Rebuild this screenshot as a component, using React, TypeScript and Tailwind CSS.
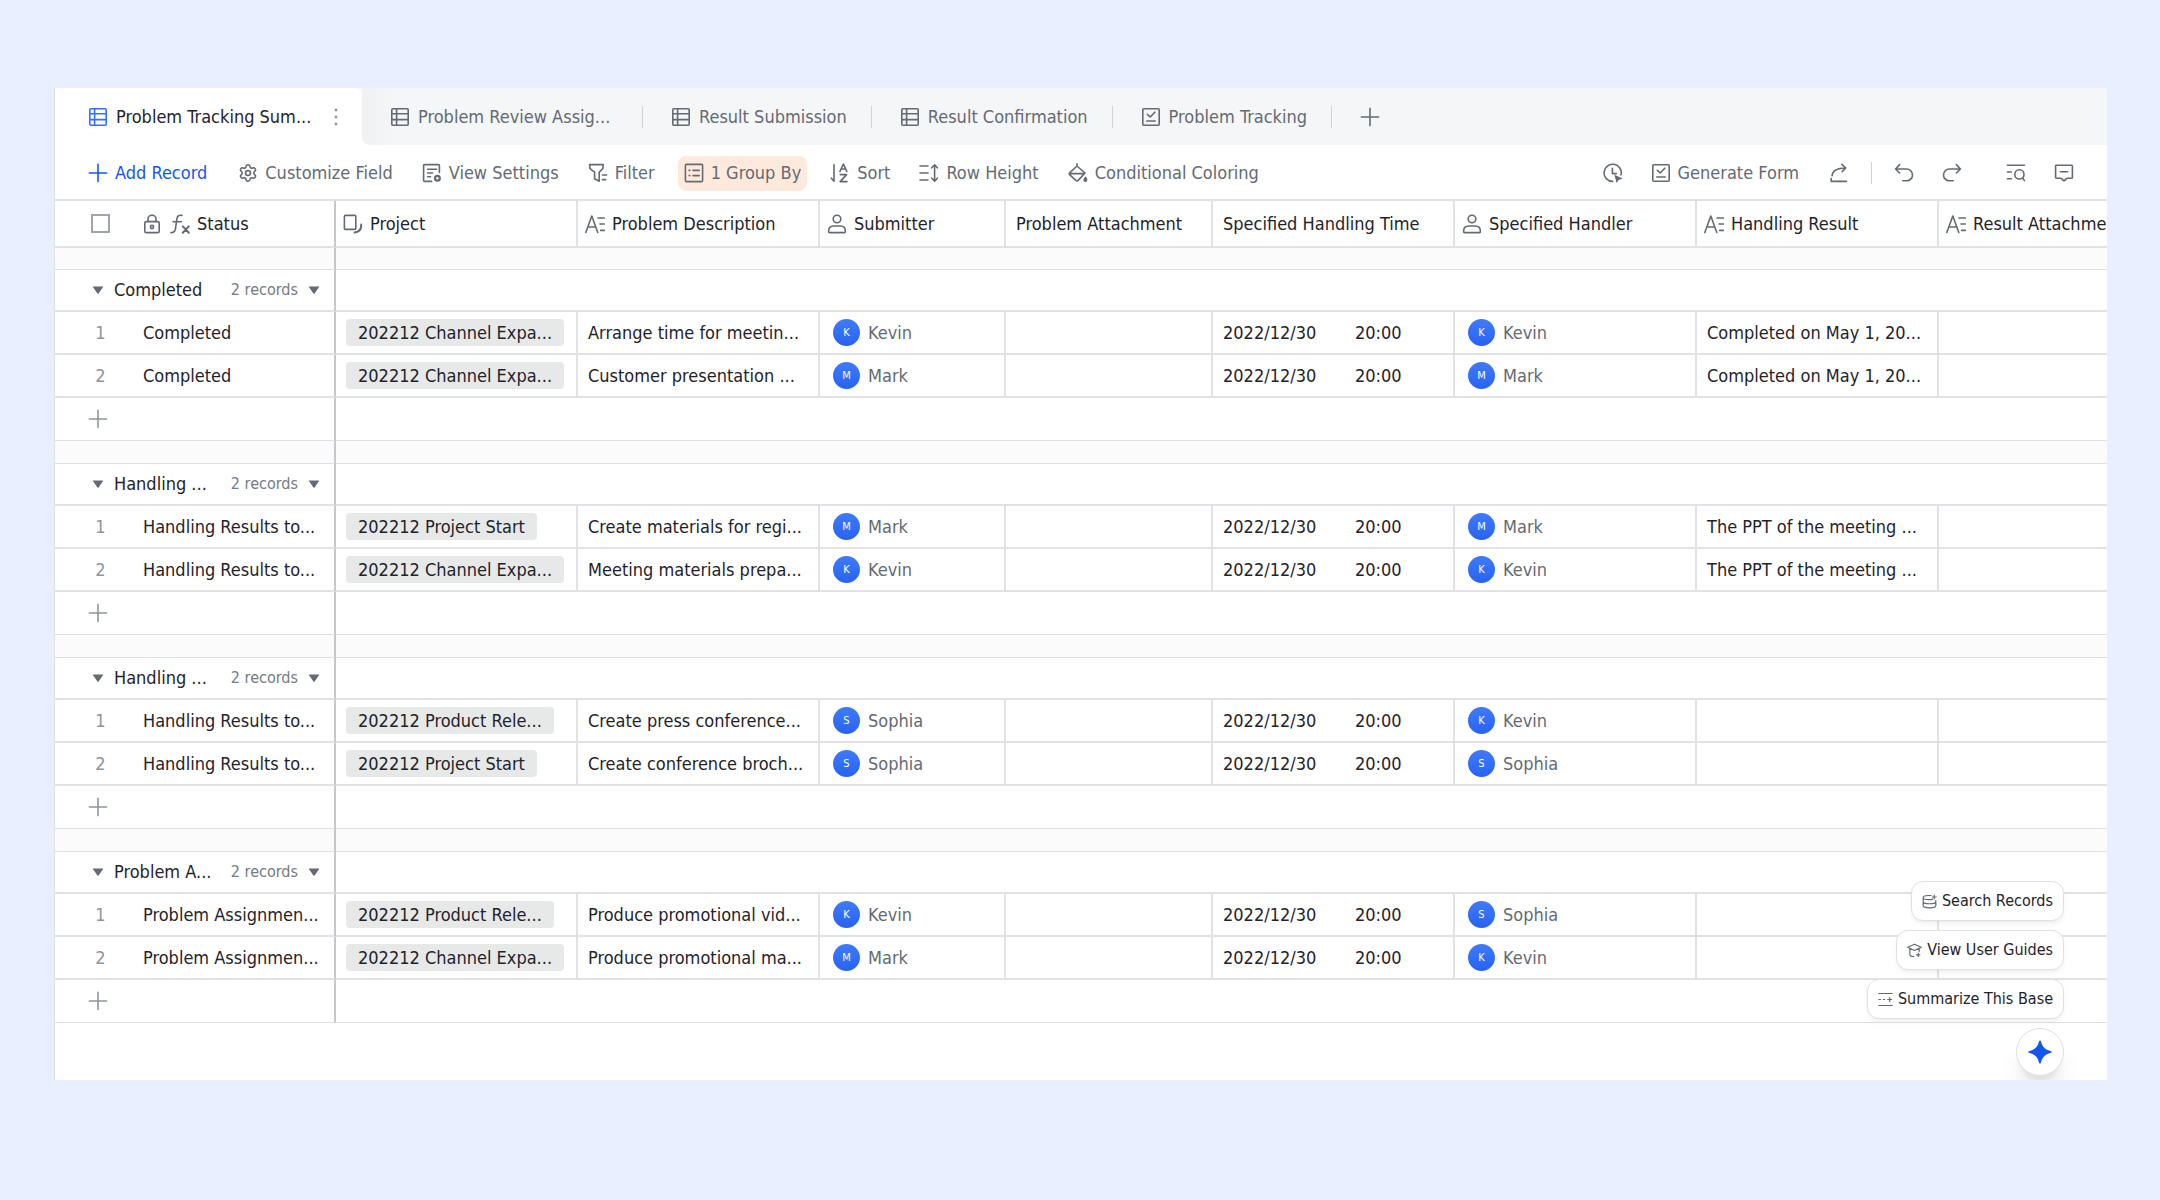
import { useState } from "react";
import type { ReactNode } from "react";
import clsx from "clsx";
import { Settings } from "lucide-react";

type Row = {
  status: string;
  project: string;
  description: string;
  submitter: string;
  handler: string;
  result?: string;
};

type Group = {
  name: string;
  rows: Row[];
};

const groups: Group[] = [
  {
    name: "Completed",
    rows: [
      { status: "Completed", project: "202212 Channel Expa...", description: "Arrange time for meetin...", submitter: "Kevin", handler: "Kevin", result: "Completed on May 1, 20..." },
      { status: "Completed", project: "202212 Channel Expa...", description: "Customer presentation ...", submitter: "Mark", handler: "Mark", result: "Completed on May 1, 20..." },
    ],
  },
  {
    name: "Handling ...",
    rows: [
      { status: "Handling Results to...", project: "202212 Project Start", description: "Create materials for regi...", submitter: "Mark", handler: "Mark", result: "The PPT of the meeting ..." },
      { status: "Handling Results to...", project: "202212 Channel Expa...", description: "Meeting materials prepa...", submitter: "Kevin", handler: "Kevin", result: "The PPT of the meeting ..." },
    ],
  },
  {
    name: "Handling ...",
    rows: [
      { status: "Handling Results to...", project: "202212 Product Rele...", description: "Create press conference...", submitter: "Sophia", handler: "Kevin" },
      { status: "Handling Results to...", project: "202212 Project Start", description: "Create conference broch...", submitter: "Sophia", handler: "Sophia" },
    ],
  },
  {
    name: "Problem A...",
    rows: [
      { status: "Problem Assignmen...", project: "202212 Product Rele...", description: "Produce promotional vid...", submitter: "Kevin", handler: "Sophia" },
      { status: "Problem Assignmen...", project: "202212 Channel Expa...", description: "Produce promotional ma...", submitter: "Mark", handler: "Kevin" },
    ],
  },
];

function Icon({ children, className = "size-5" }: { children: ReactNode; className?: string }) {
  return (
    <svg
      viewBox="0 0 20 20"
      fill="none"
      stroke="currentColor"
      strokeWidth="1.6"
      strokeLinecap="round"
      strokeLinejoin="round"
      aria-hidden="true"
      className={clsx("shrink-0", className)}
    >
      {children}
    </svg>
  );
}

const GridIcon = () => (
  <Icon>
    <rect x="1.8" y="1.8" width="16.4" height="16.4" rx="1" />
    <path d="M6.6 2v16M2 6.8h16M2 12.6h16" />
  </Icon>
);

const FormIcon = () => (
  <Icon>
    <rect x="1.8" y="1.8" width="16.4" height="16.4" rx="1" />
    <path d="M6.4 7.4l2.8 2.6 4.6-4.8M5.8 14h8.4" />
  </Icon>
);

const PlusIcon = () => (
  <Icon>
    <path d="M10 1.4v17.2M1.4 10h17.2" />
  </Icon>
);

const ViewSettingsIcon = () => (
  <Icon>
    <path d="M17.4 9.4V2.6a1 1 0 0 0-1-1H2.6a1 1 0 0 0-1 1v14.8a1 1 0 0 0 1 1h7M5.6 6.2h9M5.6 10h5M5.6 13.8h3" />
    <circle cx="15.4" cy="15.2" r="2.4" strokeWidth="2.2" />
  </Icon>
);

const FilterIcon = () => (
  <Icon>
    <path d="M1.6 1.6h13.6l-.4 4-3.6 3.6v9l-4.6-2.4V9.2L2 5.6zM14.4 12h4.2M14.4 16.6h3.4" />
  </Icon>
);

const GroupIcon = () => (
  <Icon>
    <rect x="1.4" y="1.4" width="17.2" height="17.2" rx="1" />
    <path d="M9 7.4h6.2M9 12.6h6.2M5.2 7.4h.6M5.2 12.6h.6" />
  </Icon>
);

const SortIcon = () => (
  <Icon>
    <path d="M4 1.8v16.4l-2.6-3M10 8.4L13.4 1l3.4 7.4M11.2 6h4.4M10.2 11.6h6.4l-6.4 7h6.8" />
  </Icon>
);

const RowHeightIcon = () => (
  <Icon>
    <path d="M1 3h8M1 10h8M1 17h8M15.6 2v16M12.8 4.8l2.8-3 2.8 3M12.8 15.2l2.8 3 2.8-3" />
  </Icon>
);

const PaintIcon = () => (
  <Icon>
    <path d="M9 .8V3M9 3l8 7-6.800 7.400a1.600 1.600 0 0 1-2.400 0L1.400 11.400a1 1 0 0 1 0-1.200zM1.400 10.600h15" />
    <path d="M17.400 13.200c1.400 2 2 2.800 2 3.800a2 2 0 0 1-4 0c0-1 .6-1.800 2-3.800z" fill="currentColor" stroke="none" />
  </Icon>
);

const HistoryIcon = () => (
  <Icon>
    <path d="M9.600 18.400a8.600 8.600 0 1 1 8.400-6.600M9.400 5.200v5.400h4" />
    <path d="M11.400 11.800l8.200 3.800-4 1.400-2 3z" fill="currentColor" stroke="none" />
  </Icon>
);

const ShareIcon = () => (
  <Icon>
    <path d="M3 12.800c.6-5 4.600-7.800 13.600-7.800M12.800 1.400L16.800 5l-3.600 3.600M2.200 15.600v2.800h15.200" />
  </Icon>
);

const UndoIcon = () => (
  <Icon>
    <path d="M5.600 1.600L1.600 6l4 4M2 6h10.600a5.900 5.900 0 0 1 0 11.800H8.800" />
  </Icon>
);

const RedoIcon = () => (
  <Icon>
    <path d="M14.400 1.600l4 4.400-4 4M18 6H7.400a5.900 5.900 0 0 0 0 11.800h3.800" />
  </Icon>
);

const FindIcon = () => (
  <Icon>
    <path d="M1.400 2.200h17M1.400 9h4M1.400 15.800h4M16.600 14.800l1.800 2.800" />
    <circle cx="13.400" cy="11.400" r="4.600" />
  </Icon>
);

const CommentIcon = () => (
  <Icon>
    <path d="M2.400 2.200h15.200a.8.8 0 0 1 .8.8v11.400a.8.8 0 0 1-.8.8h-4.400L10 17.800l-3.200-2.600H2.400a.8.8 0 0 1-.8-.8V3a.8.8 0 0 1 .8-.8zM6.400 8.800h7.200" />
  </Icon>
);

const LockIcon = () => (
  <Icon>
    <rect x="2.800" y="7.600" width="14.400" height="11" rx="1.400" />
    <path d="M6 7.400V5.200a4 4 0 0 1 8 0v2.200" />
    <circle cx="10" cy="13" r="1.600" />
  </Icon>
);

const FormulaIcon = () => (
  <Icon>
    <path d="M1 18.600c3 .4 4-1 4.400-3.400L7 4.400C7.400 2 8.800.8 12 1.400M3 7.800h8.400" />
    <path d="M12.800 12.400l6 6.400M18.800 12.400l-6 6.400" strokeWidth="2" />
  </Icon>
);

const LinkIcon = () => (
  <Icon>
    <rect x="1.400" y="1.400" width="11.400" height="14" rx="1" />
    <path d="M18.200 10.600c.4 4.400-1.800 7.200-6.600 8" strokeWidth="2" />
  </Icon>
);

const TextIcon = () => (
  <Icon>
    <path d="M.8 18.400L6.800 2l6 16.400M3 13h7.600M13 4h6.400M15 10h4.400M15.600 16.400h3.800" />
  </Icon>
);

const PersonIcon = () => (
  <Icon>
    <circle cx="10" cy="5" r="3.800" />
    <path d="M1.600 17.400c0-4 2-5.400 5-5.400h6.800c3 0 5 1.400 5 5.400 0 .8-.4 1.200-1.200 1.200H2.800c-.8 0-1.200-.4-1.200-1.200z" />
  </Icon>
);

const Caret = () => (
  <svg viewBox="0 0 12 8" fill="currentColor" aria-hidden="true" className="h-2 w-3 shrink-0 text-[#646a73]">
    <path d="M.6.400h10.800L6.600 7.400a.8.8 0 0 1-1.200 0z" />
  </svg>
);

const tabs = [
  { label: "Problem Review Assig...", icon: <GridIcon />, width: "w-[281px]" },
  { label: "Result Submission", icon: <GridIcon /> },
  { label: "Result Confirmation", icon: <GridIcon /> },
  { label: "Problem Tracking", icon: <FormIcon /> },
];

function Tabs() {
  return (
    <nav className="flex h-[57px] bg-white">
      <div className="bg-[#f4f6f8]">
        <div className="flex h-full w-[307px] items-center rounded-tr-lg bg-white pr-4 pl-[33px]">
          <button className="flex items-center gap-2 text-[#1f2329]">
            <span className="text-[#3370ff]">
              <GridIcon />
            </span>
            Problem Tracking Sum...
          </button>
          <button aria-label="View options" className="ml-auto flex w-5 justify-center text-[#8f959e]">
            <svg viewBox="0 0 4 18" fill="currentColor" className="h-[18px] w-1">
              <circle cx="2" cy="2" r="1.400" />
              <circle cx="2" cy="9" r="1.400" />
              <circle cx="2" cy="16" r="1.400" />
            </svg>
          </button>
        </div>
      </div>
      <div className="flex flex-1 items-center rounded-bl-lg bg-linear-to-r from-[#eff1f3] to-[#f4f6f8] to-2% text-[#646a73]">
        {tabs.map((tab) => (
          <div key={tab.label} className={clsx("flex items-center justify-between", tab.width)}>
            <button className="flex items-center gap-2 pr-6 pl-7 whitespace-nowrap">
              {tab.icon}
              {tab.label}
            </button>
            <span className="h-[22px] w-px bg-[#cfd2d6]" />
          </div>
        ))}
        <button aria-label="Add view" className="ml-7">
          <PlusIcon />
        </button>
      </div>
    </nav>
  );
}

function Tool({ icon, label, className }: { icon: ReactNode; label: string; className?: string }) {
  return (
    <button className={clsx("flex h-[35px] items-center gap-[7px] rounded-lg px-[6px] whitespace-nowrap", className)}>
      {icon}
      {label}
    </button>
  );
}

function Toolbar() {
  return (
    <div className="flex h-[56px] items-center justify-between border-b-2 border-[#e0e2e6] pt-[2px] pr-[33px] pl-[27px] text-[#646a73]">
      <div className="flex items-center gap-[17px]">
        <Tool icon={<PlusIcon />} label="Add Record" className="mr-[2px] text-[#1456f0]" />
        <Tool icon={<Settings className="size-5 shrink-0" strokeWidth={1.9} />} label="Customize Field" />
        <Tool icon={<ViewSettingsIcon />} label="View Settings" />
        <Tool icon={<FilterIcon />} label="Filter" />
        <Tool icon={<GroupIcon />} label="1 Group By" className="bg-[#feeadd]" />
        <Tool icon={<SortIcon />} label="Sort" />
        <Tool icon={<RowHeightIcon />} label="Row Height" />
        <Tool icon={<PaintIcon />} label="Conditional Coloring" />
      </div>
      <div className="flex items-center gap-7">
        <button aria-label="Automation history">
          <HistoryIcon />
        </button>
        <button className="flex items-center gap-[7px] pr-[2px] whitespace-nowrap">
          <FormIcon />
          Generate Form
        </button>
        <div className="flex items-center gap-[22px]">
          <button aria-label="Share">
            <ShareIcon />
          </button>
          <span className="h-[22px] w-px bg-[#cfd2d6]" />
          <button aria-label="Undo">
            <UndoIcon />
          </button>
        </div>
        <button aria-label="Redo">
          <RedoIcon />
        </button>
        <button aria-label="Find" className="ml-4">
          <FindIcon />
        </button>
        <button aria-label="Comments">
          <CommentIcon />
        </button>
      </div>
    </div>
  );
}

function HeadCell({ icon, label, border = "border-r-2 border-r-[#e0e2e6]" }: { icon?: ReactNode; label: string; border?: string }) {
  return (
    <th
      scope="col"
      className={clsx("overflow-hidden border-b-2 border-b-[#e0e2e6] p-0 text-left font-normal whitespace-nowrap", border)}
    >
      <div className={clsx("flex items-center gap-[7px] text-[#1f2329]", icon ? "pl-[7px]" : "pl-[10px]")}>
        {icon && <span className="text-[#646a73]">{icon}</span>}
        {label}
      </div>
    </th>
  );
}

function Person({ name }: { name: string }) {
  return (
    <div className="flex items-center gap-2 pl-[13px] text-[#646a73]">
      <span className="flex size-[27px] items-center justify-center rounded-full bg-linear-to-b from-[#3f7bff] to-[#2862f0] text-[11px] text-white">
        {name[0]}
      </span>
      {name}
    </div>
  );
}

const cell = "border-r-2 border-b-2 border-[#e0e2e6] p-0 whitespace-nowrap overflow-hidden";
const frozen = "border-r-2 border-r-[#c4c8cd]";

function Band({ height }: { height: string }) {
  return (
    <tr className={clsx("bg-[#fbfbfc]", height)}>
      <td colSpan={2} className={clsx("border-b border-b-[#dee0e3] p-0", frozen)} />
      <td colSpan={8} className="border-b border-[#dee0e3] p-0" />
    </tr>
  );
}

function GroupRows({ group, first }: { group: Group; first: boolean }) {
  const [open, setOpen] = useState(true);

  return (
    <tbody>
      {!first && <Band height="h-[23px]" />}
      <tr className="h-[42px]">
        <td colSpan={2} className={clsx("border-b-2 border-b-[#e0e2e6] p-0", frozen)}>
          <div className="flex items-center pr-[14px] pl-[37px]">
            <button onClick={() => setOpen(!open)} className="flex items-center gap-[10px] whitespace-nowrap">
              <Caret />
              {group.name}
            </button>
            <button className="ml-auto flex items-center gap-[10px] text-base whitespace-nowrap text-[#747a83]">
              {group.rows.length} records
              <Caret />
            </button>
          </div>
        </td>
        <td colSpan={8} className="border-b-2 border-[#e0e2e6] p-0" />
      </tr>
      {open &&
        group.rows.map((row, i) => (
          <tr key={i} className="h-[43px]">
            <td className="border-b-2 border-[#e0e2e6] p-0 pl-[13px] text-center text-[#8f959e]">{i + 1}</td>
            <td className={clsx("overflow-hidden border-b-2 border-b-[#e0e2e6] p-0 pl-[10px] whitespace-nowrap", frozen)}>
              {row.status}
            </td>
            <td className={cell}>
              <span className="ml-[10px] inline-flex h-[27px] items-center rounded bg-[#e7e9e9] px-3 align-middle">
                {row.project}
              </span>
            </td>
            <td className={clsx(cell, "pl-[10px]")}>{row.description}</td>
            <td className={cell}>
              <Person name={row.submitter} />
            </td>
            <td className={cell} />
            <td className={clsx(cell, "pl-[10px]")}>
              <span className="inline-block w-[132px]">2022/12/30</span>
              <span>20:00</span>
            </td>
            <td className={cell}>
              <Person name={row.handler} />
            </td>
            <td className={clsx(cell, "pl-[10px]")}>{row.result}</td>
            <td className="border-b-2 border-[#e0e2e6] p-0" />
          </tr>
        ))}
      <tr className="h-[43px]">
        <td colSpan={2} className={clsx("border-b border-b-[#dee0e3] p-0", frozen)}>
          <button aria-label="Add record to group" className="ml-[33px] block text-[#8f959e]">
            <PlusIcon />
          </button>
        </td>
        <td colSpan={8} className="border-b border-[#dee0e3] p-0" />
      </tr>
    </tbody>
  );
}

function Grid() {
  return (
    <div className="overflow-hidden">
      <table className="w-full min-w-[1900px] table-fixed border-separate border-spacing-0">
        <colgroup>
          <col className="w-[78px]" />
          <col className="w-[203px]" />
          <col className="w-[242px]" />
          <col className="w-[242px]" />
          <col className="w-[186px]" />
          <col className="w-[207px]" />
          <col className="w-[242px]" />
          <col className="w-[242px]" />
          <col className="w-[242px]" />
          <col />
        </colgroup>
        <thead>
          <tr className="h-[47px]">
            <th className="border-b-2 border-[#e0e2e6] p-0 text-left">
              <input
                type="checkbox"
                aria-label="Select all records"
                className="ml-9 block size-[19px] appearance-none border-2 border-[#a0a5ad] bg-white checked:bg-[#3370ff]"
              />
            </th>
            <HeadCell
              icon={
                <span className="flex gap-2 pl-[2px]">
                  <LockIcon />
                  <FormulaIcon />
                </span>
              }
              label="Status"
              border="border-r-2 border-r-[#c4c8cd]"
            />
            <HeadCell icon={<LinkIcon />} label="Project" />
            <HeadCell icon={<TextIcon />} label="Problem Description" />
            <HeadCell icon={<PersonIcon />} label="Submitter" />
            <HeadCell label="Problem Attachment" />
            <HeadCell label="Specified Handling Time" />
            <HeadCell icon={<PersonIcon />} label="Specified Handler" />
            <HeadCell icon={<TextIcon />} label="Handling Result" />
            <HeadCell icon={<TextIcon />} label="Result Attachment" border="border-r-0" />
          </tr>
          <Band height="h-[22px]" />
        </thead>
        {groups.map((group, i) => (
          <GroupRows key={i} group={group} first={i === 0} />
        ))}
      </table>
    </div>
  );
}

function Suggestion({ icon, label }: { icon: ReactNode; label: string }) {
  return (
    <button className="flex h-10 items-center gap-[5px] rounded-xl border border-[#dee0e3] bg-white px-[10px] text-base whitespace-nowrap shadow-md shadow-black/5">
      {icon}
      {label}
    </button>
  );
}

function Assistant() {
  return (
    <div className="absolute right-[43px] bottom-1 flex flex-col items-end gap-[9px]">
      <Suggestion
        label="Search Records"
        icon={
          <Icon className="size-[15px] text-[#646a73]">
            <path d="M12 2H8c-4 0-6.400 1-6.400 2.800S5 7.600 9 7.600c2 0 4-.2 5.400-.8M1.600 4.800v10.600c0 1.800 3.400 3 8.400 3s8.400-1.200 8.400-3V8.800M1.600 10c0 1.800 3.400 3 8.400 3s8.400-1.200 8.400-3M16.400 1.400v5.200M13.800 4H19" />
          </Icon>
        }
      />
      <Suggestion
        label="View User Guides"
        icon={
          <Icon className="size-[15px] text-[#646a73]">
            <path d="M10 1.600L19 5.600 10 10 1 5.600zM3.800 7.400v8c0 1.600 2 2.600 5.200 2.600M16.200 7.400v4M15 13.600v4.400M12.800 15.800h4.400" />
          </Icon>
        }
      />
      <Suggestion
        label="Summarize This Base"
        icon={
          <Icon className="size-[15px] text-[#646a73]">
            <path d="M1 2h18M1 10h2.400M7 10h2M1 18h18M15.600 7.400v5.200M13 10h5.200" />
          </Icon>
        }
      />
      <button
        aria-label="Open assistant"
        className="flex size-12 items-center justify-center rounded-full border border-[#dee0e3] bg-white text-[#1456f0] shadow-xl shadow-black/10"
      >
        <svg viewBox="0 0 24 24" fill="currentColor" className="size-6">
          <path d="M12 .4c.6 0 .8.4 1 1.200 1.200 5.200 4.200 8.200 9.400 9.400.8.2 1.200.4 1.200 1s-.4.800-1.200 1c-5.200 1.200-8.200 4.200-9.400 9.400-.2.8-.4 1.200-1 1.200s-.8-.4-1-1.200C9.800 17.200 6.800 14.200 1.600 13 .8 12.800.4 12.600.4 12s.4-.8 1.200-1c5.200-1.200 8.200-4.200 9.400-9.400.2-.8.4-1.200 1-1.200z" />
        </svg>
      </button>
    </div>
  );
}

export default function App() {
  return (
    <div className="flex min-h-screen flex-col bg-[#e9efff] pt-[88px] pr-[53px] pb-[120px] pl-[54px] font-['DejaVu_Sans_Condensed','Noto_Sans',sans-serif] text-lg leading-6 text-[#1f2329]">
      <main className="relative flex-1 overflow-hidden border-l border-[#dee0e3] bg-white">
        <Tabs />
        <Toolbar />
        <Grid />
        <Assistant />
      </main>
    </div>
  );
}
